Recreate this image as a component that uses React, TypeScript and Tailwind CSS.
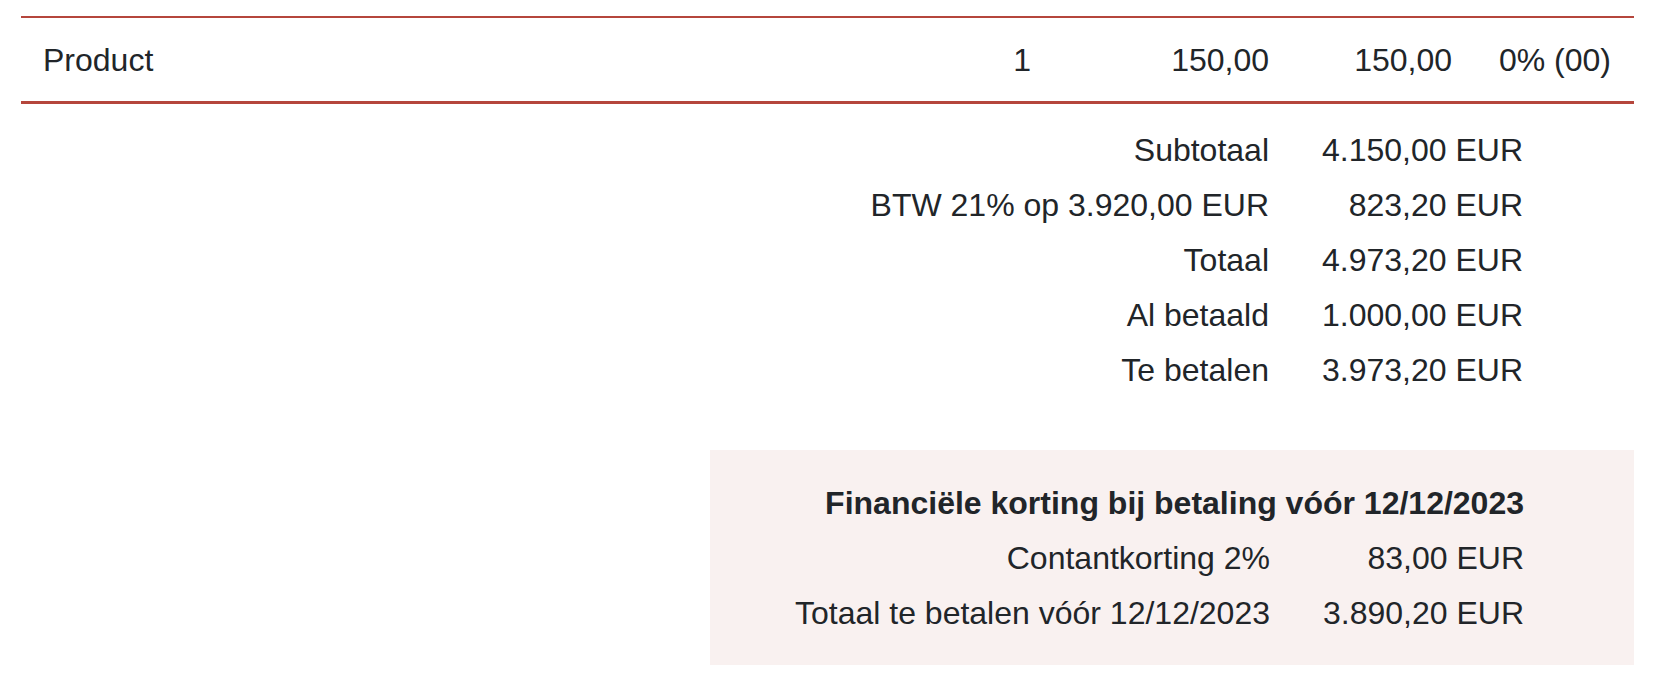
const totals = [
  { label: "Subtotaal", value: "4.150,00 EUR" },
  { label: "BTW 21% op 3.920,00 EUR", value: "823,20 EUR" },
  { label: "Totaal", value: "4.973,20 EUR" },
  { label: "Al betaald", value: "1.000,00 EUR" },
  { label: "Te betalen", value: "3.973,20 EUR" },
];

const discount = [
  { label: "Contantkorting 2%", value: "83,00 EUR" },
  { label: "Totaal te betalen vóór 12/12/2023", value: "3.890,20 EUR" },
];

export default function App() {
  return (
    <div className="min-h-screen bg-white pl-[21px] pr-[24px] pt-[16px] font-['Liberation_Sans',Arial,sans-serif] text-[32px] leading-none text-[#212529]">
      {/* line items */}
      <div className="flex h-[88px] items-center border-t-2 border-b-[3px] border-[#b5463c] pr-[23px]">
        <div className="flex-1 pl-[22px]">Product</div>
        <div className="w-[100px] text-right">1</div>
        <div className="w-[238px] text-right">150,00</div>
        <div className="w-[183px] text-right">150,00</div>
        <div className="w-[159px] text-right">0% (00)</div>
      </div>

      {/* totals */}
      <div className="mt-[18px] flex flex-col pr-[111px]">
        {totals.map((row) => (
          <div key={row.label} className="flex h-[55px] items-center justify-end">
            <div className="text-right">{row.label}</div>
            <div className="w-[254px] text-right">{row.value}</div>
          </div>
        ))}
      </div>

      {/* cash discount */}
      <div className="ml-[689px] mt-[53px] bg-[#f9f1f0] pt-[25px] pb-[25px] pr-[110px]">
        <div className="flex h-[55px] items-center justify-end font-bold">
          Financiële korting bij betaling vóór 12/12/2023
        </div>
        {discount.map((row) => (
          <div key={row.label} className="flex h-[55px] items-center justify-end">
            <div className="text-right">{row.label}</div>
            <div className="w-[254px] text-right">{row.value}</div>
          </div>
        ))}
      </div>
    </div>
  );
}
